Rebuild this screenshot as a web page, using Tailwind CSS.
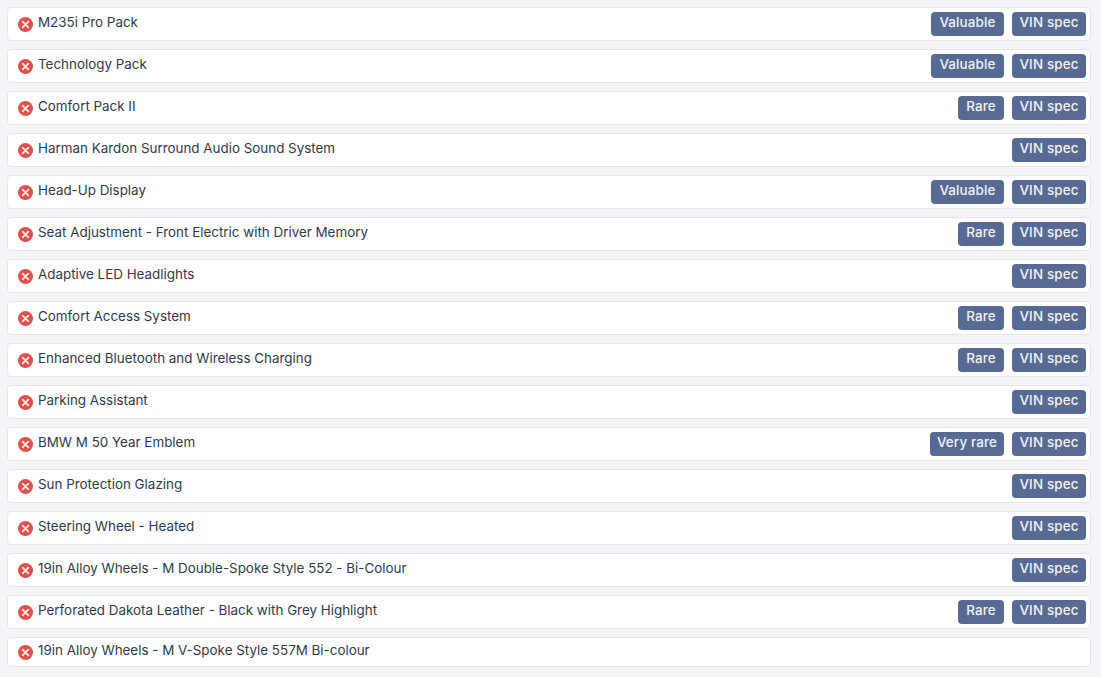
<!DOCTYPE html>
<html lang="en">
<head>
<meta charset="UTF-8">
<title>Vehicle options</title>
<script src="https://cdn.jsdelivr.net/npm/@tailwindcss/browser@4"></script>
</head>
<body class="bg-[#f3f5f8] text-[#2f3a4a] font-['Inter',sans-serif] text-[13.4px] h-[677px] overflow-hidden">
<main class="pt-[7px] pl-[7px] pr-[10px] flex flex-col gap-2">

<!-- row -->
<div class="h-[34px] bg-white border border-[#e4e7ec] rounded flex items-center pl-[9.5px] pr-[4px]">
  <svg class="w-[15px] h-[15px] mr-[5.5px] shrink-0" viewBox="0 0 16 16"><circle cx="8" cy="8" r="8" fill="#e0504a"/><path d="M5 5l6 6M11 5l-6 6" stroke="#fbe9e8" stroke-width="2" stroke-linecap="round"/></svg>
  <span class="mb-[4px] flex-1">M235i Pro Pack</span>
  <span class="bg-[#566a93] text-[#f2f4f8] font-medium rounded w-[73px] text-center tracking-[0.15px] h-6 leading-[20px]">Valuable</span>
  <span class="bg-[#566a93] text-[#f2f4f8] font-medium rounded w-[74px] text-center tracking-[0.15px] h-6 leading-[20px] ml-2">VIN spec</span>
</div>

<div class="h-[34px] bg-white border border-[#e4e7ec] rounded flex items-center pl-[9.5px] pr-[4px]">
  <svg class="w-[15px] h-[15px] mr-[5.5px] shrink-0" viewBox="0 0 16 16"><circle cx="8" cy="8" r="8" fill="#e0504a"/><path d="M5 5l6 6M11 5l-6 6" stroke="#fbe9e8" stroke-width="2" stroke-linecap="round"/></svg>
  <span class="mb-[4px] flex-1">Technology Pack</span>
  <span class="bg-[#566a93] text-[#f2f4f8] font-medium rounded w-[73px] text-center tracking-[0.15px] h-6 leading-[20px]">Valuable</span>
  <span class="bg-[#566a93] text-[#f2f4f8] font-medium rounded w-[74px] text-center tracking-[0.15px] h-6 leading-[20px] ml-2">VIN spec</span>
</div>

<div class="h-[34px] bg-white border border-[#e4e7ec] rounded flex items-center pl-[9.5px] pr-[4px]">
  <svg class="w-[15px] h-[15px] mr-[5.5px] shrink-0" viewBox="0 0 16 16"><circle cx="8" cy="8" r="8" fill="#e0504a"/><path d="M5 5l6 6M11 5l-6 6" stroke="#fbe9e8" stroke-width="2" stroke-linecap="round"/></svg>
  <span class="mb-[4px] flex-1">Comfort Pack II</span>
  <span class="bg-[#566a93] text-[#f2f4f8] font-medium rounded w-[46px] text-center tracking-[0.15px] h-6 leading-[20px]">Rare</span>
  <span class="bg-[#566a93] text-[#f2f4f8] font-medium rounded w-[74px] text-center tracking-[0.15px] h-6 leading-[20px] ml-2">VIN spec</span>
</div>

<div class="h-[34px] bg-white border border-[#e4e7ec] rounded flex items-center pl-[9.5px] pr-[4px]">
  <svg class="w-[15px] h-[15px] mr-[5.5px] shrink-0" viewBox="0 0 16 16"><circle cx="8" cy="8" r="8" fill="#e0504a"/><path d="M5 5l6 6M11 5l-6 6" stroke="#fbe9e8" stroke-width="2" stroke-linecap="round"/></svg>
  <span class="mb-[4px] flex-1">Harman Kardon Surround Audio Sound System</span>
  <span class="bg-[#566a93] text-[#f2f4f8] font-medium rounded w-[74px] text-center tracking-[0.15px] h-6 leading-[20px] ml-2">VIN spec</span>
</div>

<div class="h-[34px] bg-white border border-[#e4e7ec] rounded flex items-center pl-[9.5px] pr-[4px]">
  <svg class="w-[15px] h-[15px] mr-[5.5px] shrink-0" viewBox="0 0 16 16"><circle cx="8" cy="8" r="8" fill="#e0504a"/><path d="M5 5l6 6M11 5l-6 6" stroke="#fbe9e8" stroke-width="2" stroke-linecap="round"/></svg>
  <span class="mb-[4px] flex-1">Head-Up Display</span>
  <span class="bg-[#566a93] text-[#f2f4f8] font-medium rounded w-[73px] text-center tracking-[0.15px] h-6 leading-[20px]">Valuable</span>
  <span class="bg-[#566a93] text-[#f2f4f8] font-medium rounded w-[74px] text-center tracking-[0.15px] h-6 leading-[20px] ml-2">VIN spec</span>
</div>

<div class="h-[34px] bg-white border border-[#e4e7ec] rounded flex items-center pl-[9.5px] pr-[4px]">
  <svg class="w-[15px] h-[15px] mr-[5.5px] shrink-0" viewBox="0 0 16 16"><circle cx="8" cy="8" r="8" fill="#e0504a"/><path d="M5 5l6 6M11 5l-6 6" stroke="#fbe9e8" stroke-width="2" stroke-linecap="round"/></svg>
  <span class="mb-[4px] flex-1">Seat Adjustment - Front Electric with Driver Memory</span>
  <span class="bg-[#566a93] text-[#f2f4f8] font-medium rounded w-[46px] text-center tracking-[0.15px] h-6 leading-[20px]">Rare</span>
  <span class="bg-[#566a93] text-[#f2f4f8] font-medium rounded w-[74px] text-center tracking-[0.15px] h-6 leading-[20px] ml-2">VIN spec</span>
</div>

<div class="h-[34px] bg-white border border-[#e4e7ec] rounded flex items-center pl-[9.5px] pr-[4px]">
  <svg class="w-[15px] h-[15px] mr-[5.5px] shrink-0" viewBox="0 0 16 16"><circle cx="8" cy="8" r="8" fill="#e0504a"/><path d="M5 5l6 6M11 5l-6 6" stroke="#fbe9e8" stroke-width="2" stroke-linecap="round"/></svg>
  <span class="mb-[4px] flex-1">Adaptive LED Headlights</span>
  <span class="bg-[#566a93] text-[#f2f4f8] font-medium rounded w-[74px] text-center tracking-[0.15px] h-6 leading-[20px] ml-2">VIN spec</span>
</div>

<div class="h-[34px] bg-white border border-[#e4e7ec] rounded flex items-center pl-[9.5px] pr-[4px]">
  <svg class="w-[15px] h-[15px] mr-[5.5px] shrink-0" viewBox="0 0 16 16"><circle cx="8" cy="8" r="8" fill="#e0504a"/><path d="M5 5l6 6M11 5l-6 6" stroke="#fbe9e8" stroke-width="2" stroke-linecap="round"/></svg>
  <span class="mb-[4px] flex-1">Comfort Access System</span>
  <span class="bg-[#566a93] text-[#f2f4f8] font-medium rounded w-[46px] text-center tracking-[0.15px] h-6 leading-[20px]">Rare</span>
  <span class="bg-[#566a93] text-[#f2f4f8] font-medium rounded w-[74px] text-center tracking-[0.15px] h-6 leading-[20px] ml-2">VIN spec</span>
</div>

<div class="h-[34px] bg-white border border-[#e4e7ec] rounded flex items-center pl-[9.5px] pr-[4px]">
  <svg class="w-[15px] h-[15px] mr-[5.5px] shrink-0" viewBox="0 0 16 16"><circle cx="8" cy="8" r="8" fill="#e0504a"/><path d="M5 5l6 6M11 5l-6 6" stroke="#fbe9e8" stroke-width="2" stroke-linecap="round"/></svg>
  <span class="mb-[4px] flex-1">Enhanced Bluetooth and Wireless Charging</span>
  <span class="bg-[#566a93] text-[#f2f4f8] font-medium rounded w-[46px] text-center tracking-[0.15px] h-6 leading-[20px]">Rare</span>
  <span class="bg-[#566a93] text-[#f2f4f8] font-medium rounded w-[74px] text-center tracking-[0.15px] h-6 leading-[20px] ml-2">VIN spec</span>
</div>

<div class="h-[34px] bg-white border border-[#e4e7ec] rounded flex items-center pl-[9.5px] pr-[4px]">
  <svg class="w-[15px] h-[15px] mr-[5.5px] shrink-0" viewBox="0 0 16 16"><circle cx="8" cy="8" r="8" fill="#e0504a"/><path d="M5 5l6 6M11 5l-6 6" stroke="#fbe9e8" stroke-width="2" stroke-linecap="round"/></svg>
  <span class="mb-[4px] flex-1">Parking Assistant</span>
  <span class="bg-[#566a93] text-[#f2f4f8] font-medium rounded w-[74px] text-center tracking-[0.15px] h-6 leading-[20px] ml-2">VIN spec</span>
</div>

<div class="h-[34px] bg-white border border-[#e4e7ec] rounded flex items-center pl-[9.5px] pr-[4px]">
  <svg class="w-[15px] h-[15px] mr-[5.5px] shrink-0" viewBox="0 0 16 16"><circle cx="8" cy="8" r="8" fill="#e0504a"/><path d="M5 5l6 6M11 5l-6 6" stroke="#fbe9e8" stroke-width="2" stroke-linecap="round"/></svg>
  <span class="mb-[4px] flex-1">BMW M 50 Year Emblem</span>
  <span class="bg-[#566a93] text-[#f2f4f8] font-medium rounded w-[74px] text-center tracking-[0.15px] h-6 leading-[20px]">Very rare</span>
  <span class="bg-[#566a93] text-[#f2f4f8] font-medium rounded w-[74px] text-center tracking-[0.15px] h-6 leading-[20px] ml-2">VIN spec</span>
</div>

<div class="h-[34px] bg-white border border-[#e4e7ec] rounded flex items-center pl-[9.5px] pr-[4px]">
  <svg class="w-[15px] h-[15px] mr-[5.5px] shrink-0" viewBox="0 0 16 16"><circle cx="8" cy="8" r="8" fill="#e0504a"/><path d="M5 5l6 6M11 5l-6 6" stroke="#fbe9e8" stroke-width="2" stroke-linecap="round"/></svg>
  <span class="mb-[4px] flex-1">Sun Protection Glazing</span>
  <span class="bg-[#566a93] text-[#f2f4f8] font-medium rounded w-[74px] text-center tracking-[0.15px] h-6 leading-[20px] ml-2">VIN spec</span>
</div>

<div class="h-[34px] bg-white border border-[#e4e7ec] rounded flex items-center pl-[9.5px] pr-[4px]">
  <svg class="w-[15px] h-[15px] mr-[5.5px] shrink-0" viewBox="0 0 16 16"><circle cx="8" cy="8" r="8" fill="#e0504a"/><path d="M5 5l6 6M11 5l-6 6" stroke="#fbe9e8" stroke-width="2" stroke-linecap="round"/></svg>
  <span class="mb-[4px] flex-1">Steering Wheel - Heated</span>
  <span class="bg-[#566a93] text-[#f2f4f8] font-medium rounded w-[74px] text-center tracking-[0.15px] h-6 leading-[20px] ml-2">VIN spec</span>
</div>

<div class="h-[34px] bg-white border border-[#e4e7ec] rounded flex items-center pl-[9.5px] pr-[4px]">
  <svg class="w-[15px] h-[15px] mr-[5.5px] shrink-0" viewBox="0 0 16 16"><circle cx="8" cy="8" r="8" fill="#e0504a"/><path d="M5 5l6 6M11 5l-6 6" stroke="#fbe9e8" stroke-width="2" stroke-linecap="round"/></svg>
  <span class="mb-[4px] flex-1">19in Alloy Wheels - M Double-Spoke Style 552 - Bi-Colour</span>
  <span class="bg-[#566a93] text-[#f2f4f8] font-medium rounded w-[74px] text-center tracking-[0.15px] h-6 leading-[20px] ml-2">VIN spec</span>
</div>

<div class="h-[34px] bg-white border border-[#e4e7ec] rounded flex items-center pl-[9.5px] pr-[4px]">
  <svg class="w-[15px] h-[15px] mr-[5.5px] shrink-0" viewBox="0 0 16 16"><circle cx="8" cy="8" r="8" fill="#e0504a"/><path d="M5 5l6 6M11 5l-6 6" stroke="#fbe9e8" stroke-width="2" stroke-linecap="round"/></svg>
  <span class="mb-[4px] flex-1">Perforated Dakota Leather - Black with Grey Highlight</span>
  <span class="bg-[#566a93] text-[#f2f4f8] font-medium rounded w-[46px] text-center tracking-[0.15px] h-6 leading-[20px]">Rare</span>
  <span class="bg-[#566a93] text-[#f2f4f8] font-medium rounded w-[74px] text-center tracking-[0.15px] h-6 leading-[20px] ml-2">VIN spec</span>
</div>

<div class="h-[30px] bg-white border border-[#e4e7ec] rounded flex items-center pl-[9.5px] pr-[4px]">
  <svg class="w-[15px] h-[15px] mr-[5.5px] shrink-0" viewBox="0 0 16 16"><circle cx="8" cy="8" r="8" fill="#e0504a"/><path d="M5 5l6 6M11 5l-6 6" stroke="#fbe9e8" stroke-width="2" stroke-linecap="round"/></svg>
  <span class="mb-[4px] flex-1">19in Alloy Wheels - M V-Spoke Style 557M Bi-colour</span>
</div>

</main>
</body>
</html>
